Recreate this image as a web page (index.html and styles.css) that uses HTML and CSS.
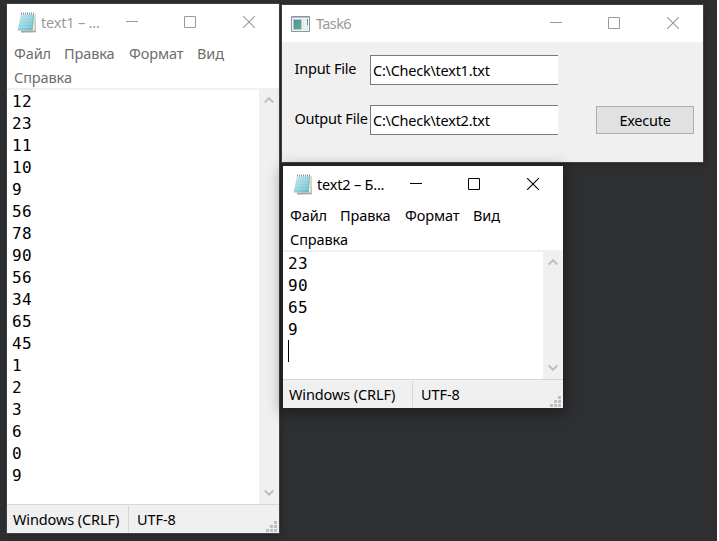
FILE: index.html
```
<!DOCTYPE html>
<html lang="ru">
<head>
<meta charset="utf-8">
<title>Desktop</title>
<link rel="stylesheet" href="styles.css">
</head>
<body>
<svg class="defs" width="0" height="0" aria-hidden="true">
  <defs>
    <linearGradient id="page" x1="0" y1="0" x2="1" y2="1"><stop offset="0" stop-color="#c8edf2"/><stop offset=".55" stop-color="#8fd0dc"/><stop offset="1" stop-color="#58b3c4"/></linearGradient>
    <linearGradient id="pane" x1="0" y1="0" x2="1" y2="1"><stop offset="0" stop-color="#4888b0"/><stop offset="1" stop-color="#5fb878"/></linearGradient>
    <symbol id="notepad" viewBox="0 0 20 21">
      <path d="M5 2L18.500 2L19 20L4 20.500Z" fill="#cbbd9d"/>
      <path d="M4 2L17.500 2L17.500 18.500L1 18.500Z" fill="#f3f7f5"/>
      <path d="M4 2.500L17 2.500L15.500 18.500L.5 18.500Z" fill="url(#page)"/>
      <path d="M4 6H16M3.500 9H15.500M3 12H15M2 15H15" stroke="#b6e4eb" stroke-width=".6"/>
      <path d="M16.500 3L15.500 18.500" stroke="#7fb4bf" stroke-width=".7"/>
      <path d="M4 1.500H18" stroke="#839296" stroke-width="2" stroke-dasharray="1 1"/>
      <path d="M4 19.800H18.500" stroke="#a49a80"/>
    </symbol>
    <symbol id="form" viewBox="0 0 19 16">
      <path d="M.5.5h18v15H.5z" fill="#f2f5f6" stroke="#8b969b"/>
      <path d="M1 1.500h17" stroke="#b4bec3"/>
      <path d="M2.500 3.500h8v10h-8z" fill="url(#pane)" stroke="#b6c7ca"/>
      <path d="M12.500 3.500h4v10h-4z" fill="#edf1f1" stroke="#dfe5e5"/>
      <path d="M16.500 3v6" stroke="#5b9aa4"/>
    </symbol>
    <symbol id="min" viewBox="0 0 12 12"><path d="M0 5.500h12" stroke="currentColor"/></symbol>
    <symbol id="max" viewBox="0 0 12 12"><path d="M.5.5h11v11H.5z" fill="none" stroke="currentColor"/></symbol>
    <symbol id="close" viewBox="0 0 12 12"><path d="M0 0L12 12M12 0L0 12" stroke="currentColor" stroke-width="1.100"/></symbol>
    <symbol id="up" viewBox="0 0 10 8"><path d="M.7 6.500L5 2.200L9.300 6.500" fill="none" stroke="#bfbfbf" stroke-width="2"/></symbol>
    <symbol id="down" viewBox="0 0 10 8"><path d="M.7 1.500L5 5.800L9.300 1.500" fill="none" stroke="#bfbfbf" stroke-width="2"/></symbol>
    <symbol id="grip" viewBox="0 0 11 11"><path d="M8 0h3v3H8zM4 4h3v3H4zM8 4h3v3H8zM0 8h3v3H0zM4 8h3v3H4zM8 8h3v3H8z" fill="#bfbfbf"/></symbol>
  </defs>
</svg>
<main class="desktop">
  <section class="window first inactive">
    <header class="titlebar">
      <svg class="app-icon"><use href="#notepad"/></svg>
      <span class="title">text1 – ...</span>
      <div class="controls"><svg><use href="#min"/></svg><svg><use href="#max"/></svg><svg><use href="#close"/></svg></div>
    </header>
    <nav class="menu"><span class="m-file">Файл</span><span class="m-edit">Правка</span><span class="m-format">Формат</span><span class="m-view">Вид</span><span class="m-help">Справка</span></nav>
    <div class="editor">
      <div class="lines"><p>12</p><p>23</p><p>11</p><p>10</p><p>9</p><p>56</p><p>78</p><p>90</p><p>56</p><p>34</p><p>65</p><p>45</p><p>1</p><p>2</p><p>3</p><p>6</p><p>0</p><p>9</p></div>
      <div class="scrollbar"><svg><use href="#up"/></svg><svg><use href="#down"/></svg></div>
    </div>
    <footer class="status"><span class="eol">Windows (CRLF)</span><span class="enc">UTF-8</span><svg class="grip"><use href="#grip"/></svg></footer>
  </section>

  <section class="window task inactive">
    <header class="titlebar">
      <svg class="form-icon"><use href="#form"/></svg>
      <span class="title">Task6</span>
      <div class="controls"><svg><use href="#min"/></svg><svg><use href="#max"/></svg><svg><use href="#close"/></svg></div>
    </header>
    <div class="form">
      <div class="row"><span class="label">Input File</span><span class="field">C:\Check\text1.txt</span></div>
      <div class="row"><span class="label">Output File</span><span class="field">C:\Check\text2.txt</span><button class="execute">Execute</button></div>
    </div>
  </section>

  <section class="window second">
    <header class="titlebar">
      <svg class="app-icon"><use href="#notepad"/></svg>
      <span class="title">text2 – Б...</span>
      <div class="controls"><svg><use href="#min"/></svg><svg><use href="#max"/></svg><svg><use href="#close"/></svg></div>
    </header>
    <nav class="menu"><span class="m-file">Файл</span><span class="m-edit">Правка</span><span class="m-format">Формат</span><span class="m-view">Вид</span><span class="m-help">Справка</span></nav>
    <div class="editor">
      <div class="lines"><p>23</p><p>90</p><p>65</p><p>9</p><p class="caret"></p></div>
      <div class="scrollbar"><svg><use href="#up"/></svg><svg><use href="#down"/></svg></div>
    </div>
    <footer class="status"><span class="eol">Windows (CRLF)</span><span class="enc">UTF-8</span><svg class="grip"><use href="#grip"/></svg></footer>
  </section>
</main>
</body>
</html>
```
FILE: styles.css
```
* { box-sizing: border-box; }
body { margin: 0; background: #fff; font: 14.5px/20px "Noto Sans", sans-serif; color: #000; overflow: hidden; }
p { margin: 0; }
svg { display: block; flex: none; }
.defs { position: absolute; }
.desktop { position: relative; width: 717px; height: 541px; overflow: hidden; background: #2e2f31; }

.window { position: absolute; display: flex; flex-direction: column; background: #fff; white-space: nowrap; outline: 1px solid #414243; box-shadow: 1px 2px 7px rgba(0,0,0,.3); }
.first { left: 7px; top: 4px; width: 272px; height: 529px; }
.task { left: 282px; top: 5px; width: 421px; height: 157px; background: #f0f0f0; }
.second { left: 283px; top: 166px; width: 280px; height: 242px; outline-color: #222324; box-shadow: 0 3px 14px 1px rgba(0,0,0,.42); }

.titlebar { display: flex; align-items: center; height: 37px; padding-left: 10px; background: #fff; flex: none; }
.second .titlebar { padding-left: 10px; }
.task .titlebar { padding-left: 9px; }
.app-icon { width: 20px; height: 21px; }
.form-icon { width: 19px; height: 16px; }
.title { margin-left: 4px; letter-spacing: -.2px; }
.first .titlebar, .second .titlebar { height: 36px; margin-bottom: 1px; }
.task .title { margin-left: 6px; margin-top: -2px; letter-spacing: -.6px; }
.inactive .title, .inactive .controls { color: #999; }
.inactive .menu { color: #6d6d6d; }
.controls { display: flex; gap: 47px; margin-left: auto; padding-right: 24px; }
.controls svg { width: 12px; height: 12px; }
.controls svg:first-child { margin-right: -1px; }
.task .controls { margin-top: -1px; }

.menu { display: flex; flex-wrap: wrap; align-content: flex-start; height: 49px; padding: 0 0 0 7px; line-height: 24px; border-bottom: 2px solid #f0f0f0; flex: none; }
.first .menu { margin-top: -2px; height: 51px; padding-top: 2px; }
.menu span { letter-spacing: -.1px; }
.m-file { width: 50px; }
.m-edit { width: 65px; }
.m-format { width: 68px; }
.m-view { width: 40px; }
.m-help { width: 100%; }

.editor { display: flex; flex: 1; min-height: 0; }
.lines { flex: 1; padding: 1px 0 0 5px; font: 16px/22px "DejaVu Sans Mono", monospace; letter-spacing: .25px; }
.caret { width: 1px; height: 22px; margin-top: -1px; background: #000; }
.scrollbar { display: flex; flex-direction: column; justify-content: space-between; align-items: center; width: 20px; padding: 6px 1px 7px 0; background: #f0f0f0; }
.scrollbar svg { width: 10px; height: 8px; }

.status { display: flex; height: 29px; padding: 1px 0 1px; background: #f0f0f0; border-top: 1px solid #d7d7d7; line-height: 26px; flex: none; }
.eol { width: 122px; padding-left: 6px; border-right: 1px solid #d7d7d7; letter-spacing: -.12px; }
.second .eol { width: 130px; }
.enc { padding-left: 8px; letter-spacing: -.1px; }
.grip { width: 11px; height: 11px; margin: auto 2px 0 auto; }

.form { display: flex; flex-direction: column; gap: 20px; padding: 13px 9px 0 12.5px; }
.row { display: flex; height: 30px; }
.label { width: 75.5px; line-height: 27px; letter-spacing: -.22px; }
.field { width: 188px; padding-left: 2px; background: #fff; border: 1px solid #7a7a7a; border-right: 0; line-height: 28px; letter-spacing: -.25px; }
.execute { width: 98px; height: 28px; margin: 1px 0 0 auto; padding: 0; background: #e1e1e1; border: 1px solid #adadad; font: inherit; line-height: 26px; letter-spacing: -.25px; }
```
